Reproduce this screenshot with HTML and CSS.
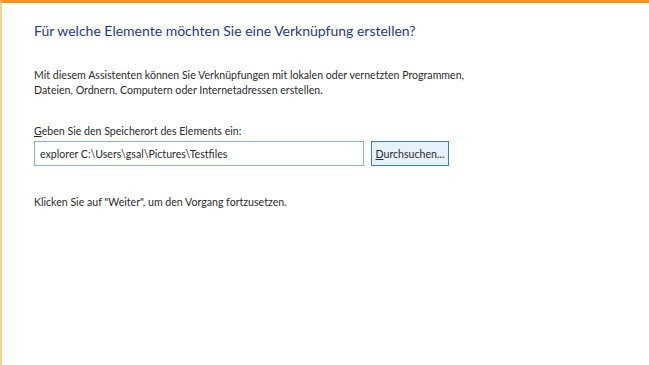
FILE: index.html
```html
<!DOCTYPE html>
<html>
<head>
  <meta charset="utf-8">
  <title>Verknüpfung erstellen</title>
  <link rel="stylesheet" href="styles.css">
</head>
<body>
  <div class="wizard">
    <h1 class="title">Für welche Elemente möchten Sie eine Verknüpfung erstellen?</h1>

    <p class="intro">Mit diesem Assistenten können Sie Verknüpfungen mit lokalen oder vernetzten Programmen,<br>
      Dateien, Ordnern, Computern oder Internetadressen erstellen.</p>

    <label class="label" for="location"><u>G</u>eben Sie den Speicherort des Elements ein:</label>
    <div class="location-row">
      <input id="location" class="location" type="text" value="explorer C:\Users\gsal\Pictures\Testfiles">
      <button class="browse"><u>D</u>urchsuchen...</button>
    </div>

    <p class="hint">Klicken Sie auf "Weiter", um den Vorgang fortzusetzen.</p>
  </div>
</body>
</html>
```

FILE: styles.css
```css
html, body {
  margin: 0;
  height: 100%;
  background: #fff;
}

.wizard {
  box-sizing: border-box;
  height: 100%;
  border-top: 3px solid #f7931e;
  border-left: 2px solid #f0d49a;
  padding: 18px 0 0 32px;
  font-family: Lato, "Open Sans", sans-serif;
  color: #2b2b2b;
}

.title {
  margin: 0;
  font-size: 14px;
  line-height: 20px;
  font-weight: normal;
  color: #1f3a8a;
}

.intro {
  margin: 27px 0 0;
  font-size: 10.6px;
  line-height: 15px;
}

.label {
  display: block;
  margin-top: 26px;
  font-size: 10.6px;
  line-height: 15px;
}

.location-row {
  display: flex;
  gap: 7px;
  margin-top: 2px;
}

.location {
  box-sizing: border-box;
  width: 330px;
  height: 25px;
  margin: 0;
  padding: 0 5px;
  border: 1px solid #7eb4ea;
  font-family: inherit;
  font-size: 10.6px;
  color: #2b2b2b;
  outline: none;
}

.browse {
  box-sizing: border-box;
  width: 78px;
  height: 25px;
  margin: 0;
  padding: 0;
  border: 1px solid #3c7fb1;
  background: #e5f1fb;
  font-family: inherit;
  font-size: 10.6px;
  color: #2b2b2b;
}

.hint {
  margin: 29px 0 0;
  font-size: 10.6px;
  line-height: 15px;
}
```
